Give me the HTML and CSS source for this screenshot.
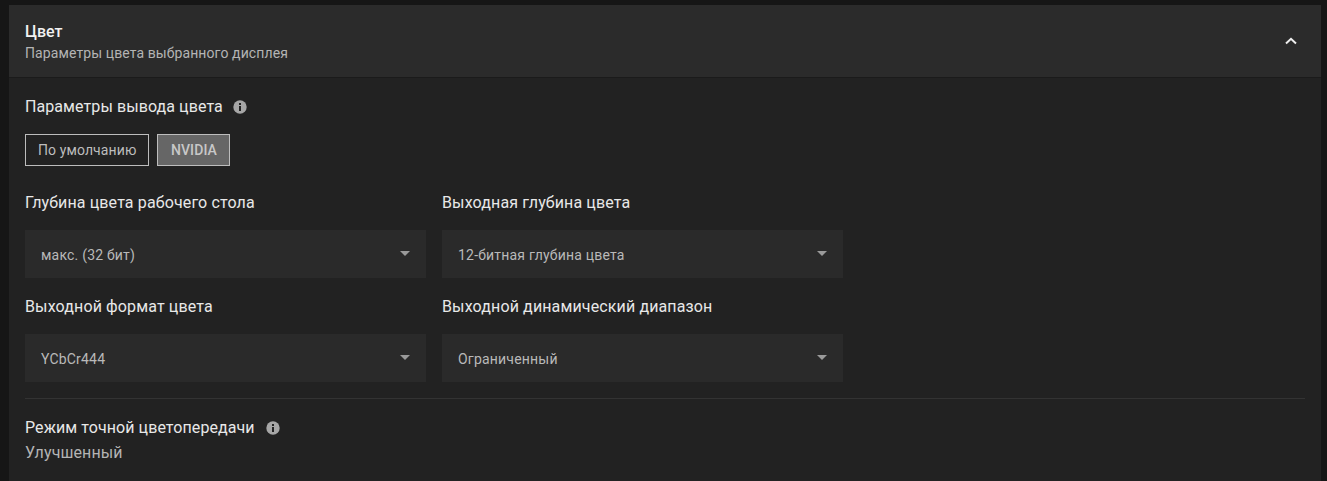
FILE: index.html
```html
<!DOCTYPE html>
<html lang="ru">
<head>
<meta charset="utf-8">
<title>Цвет</title>
<link rel="stylesheet" href="styles.css">
</head>
<body>
<section class="panel">
  <header class="panel-head">
    <div>
      <h2 class="head-title">Цвет</h2>
      <p class="head-sub">Параметры цвета выбранного дисплея</p>
    </div>
    <svg class="chevron" width="12" height="8" viewBox="0 0 12 8"><path d="M1 6.5 6 1.8l5 4.7" fill="none" stroke="#eee" stroke-width="2"/></svg>
  </header>
  <div class="panel-body">
    <div class="label-row">
      <span class="label">Параметры вывода цвета</span>
      <svg class="info" width="14" height="14" viewBox="0 0 14 14"><circle cx="7" cy="7" r="6.7" fill="#a6a6a6"/><rect x="6" y="6" width="2" height="5" fill="#222"/><rect x="6" y="3" width="2" height="2" fill="#222"/></svg>
    </div>
    <div class="toggles">
      <div class="toggle">По умолчанию</div>
      <div class="toggle toggle-on">NVIDIA</div>
    </div>
    <div class="grid">
      <div class="field">
        <div class="label">Глубина цвета рабочего стола</div>
        <div class="select"><span class="select-text">макс. (32 бит)</span><i class="caret"></i></div>
      </div>
      <div class="field">
        <div class="label">Выходная глубина цвета</div>
        <div class="select"><span class="select-text">12-битная глубина цвета</span><i class="caret"></i></div>
      </div>
      <div class="field">
        <div class="label">Выходной формат цвета</div>
        <div class="select"><span class="select-text">YCbCr444</span><i class="caret"></i></div>
      </div>
      <div class="field">
        <div class="label">Выходной динамический диапазон</div>
        <div class="select"><span class="select-text">Ограниченный</span><i class="caret"></i></div>
      </div>
    </div>
    <hr class="rule">
    <div class="label-row label-row-last">
      <span class="label">Режим точной цветопередачи</span>
      <svg class="info" width="14" height="14" viewBox="0 0 14 14"><circle cx="7" cy="7" r="6.7" fill="#a6a6a6"/><rect x="6" y="6" width="2" height="5" fill="#222"/><rect x="6" y="3" width="2" height="2" fill="#222"/></svg>
    </div>
    <div class="value">Улучшенный</div>
  </div>
</section>
</body>
</html>
```
FILE: styles.css
```css
* { box-sizing: border-box; }
html, body { height: 100%; }
body {
  margin: 0;
  padding: 5px 6px 0 9px;
  background: #161616;
  font-family: Roboto, "Liberation Sans", sans-serif;
  overflow: hidden;
}
.panel { background: #222222; height: 476px; }
.panel-head {
  height: 73px;
  padding: 0 24px 0 16px;
  background: #2b2b2b;
  border-bottom: 1px solid #1b1b1b;
  display: flex;
  align-items: center;
  justify-content: space-between;
}
.head-title { margin: 2px 0 0; font-size: 16px; line-height: 20px; font-weight: 500; color: #f2f2f2; }
.head-sub { margin: 2px 0 0; font-size: 14px; line-height: 18px; letter-spacing: .1px; color: #b4b4b4; }
.chevron { margin-top: -1px; }
.panel-body { padding: 17px 16px 0; }
.label-row { display: flex; align-items: center; gap: 10px; height: 24px; }
.label { font-size: 16px; line-height: 24px; letter-spacing: .13px; color: #e8e8e8; }
.label-row .label { letter-spacing: .08px; }
.label-row-last { gap: 11px; }
.info { flex: none; }
.toggles { display: flex; gap: 8px; margin-top: 15px; }
.toggle {
  height: 32px;
  padding: 0 12px;
  border: 1px solid #bdbdbd;
  font-size: 14px;
  line-height: 30px;
  letter-spacing: .1px;
  color: #bdbdbd;
}
.toggle-on { padding: 0 12.5px; background: #666666; color: #c8c8c8; font-weight: 500; }
.grid {
  display: grid;
  grid-template-columns: 401px 401px;
  column-gap: 16px;
  row-gap: 17px;
  margin-top: 25px;
}
.field .label { height: 24px; margin-bottom: 15px; }
.select {
  height: 48px;
  padding: 0 16px;
  background: #2a2a2a;
  display: flex;
  align-items: center;
  justify-content: space-between;
  font-size: 14px;
  letter-spacing: .2px;
  color: #b9b9b9;
}
.select-text { padding-top: 2px; }
.caret {
  width: 0;
  height: 0;
  margin: 0 0 1px 0;
  border-left: 5px solid transparent;
  border-right: 5px solid transparent;
  border-top: 5px solid #9a9a9a;
}
.rule { margin: 16px 0 0; border: 0; border-top: 1px solid #333333; }
.label-row-last { margin-top: 17px; }
.value { margin-top: 1px; font-size: 16px; line-height: 24px; letter-spacing: .1px; color: #b4b4b4; }
```
